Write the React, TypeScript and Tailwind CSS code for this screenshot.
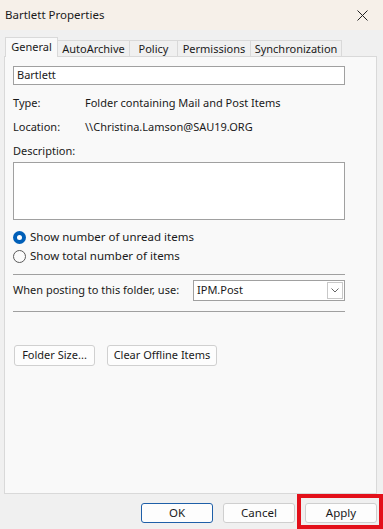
import React from "react";

const font = { fontFamily: '"Noto Sans", "Segoe UI", sans-serif' };

function Btn({ children, w, primary }: { children: React.ReactNode; w: string; primary?: boolean }) {
  return (
    <div
      className={`${w} h-[20px] flex items-center justify-center rounded-[3px] bg-[#fdfdfd] text-[11.5px] text-[#1a1a1a] border ${
        primary ? "border-[#1e5fa8]" : "border-[#cfcfcf]"
      }`}
    >
      {children}
    </div>
  );
}

export default function App() {
  return (
    <div
      className="relative w-[383px] h-[529px] bg-[#f0f0f0] flex flex-col text-[11px] text-[#1a1a1a] overflow-hidden"
      style={font}
    >
      {/* title bar */}
      <div className="h-[30px] flex items-center justify-between pl-[5px] pr-[15px] bg-[#f6f0e9]">
        <span className="text-[11.5px]">Bartlett Properties</span>
        <svg width="11" height="11" viewBox="0 0 11 11">
          <path d="M0.5 0.5 L10.5 10.5 M10.5 0.5 L0.5 10.5" stroke="#222" strokeWidth="1" />
        </svg>
      </div>

      <div className="px-[4px] pt-[7px] flex flex-col">
        {/* tabs */}
        <div className="flex items-end h-[20px] pl-[1px]">
          <div className="h-[20px] w-[53px] flex items-center justify-center bg-[#f9f9f9] border border-b-0 border-[#d9d9d9] relative z-10">
            General
          </div>
          <div className="h-[17px] w-[72px] flex items-center justify-center border-t border-r border-[#d9d9d9] bg-[#f0f0f0]">
            AutoArchive
          </div>
          <div className="h-[17px] w-[48px] flex items-center justify-center border-t border-r border-[#d9d9d9] bg-[#f0f0f0]">
            Policy
          </div>
          <div className="h-[17px] w-[73px] flex items-center justify-center border-t border-r border-[#d9d9d9] bg-[#f0f0f0]">
            Permissions
          </div>
          <div className="h-[17px] w-[91px] flex items-center justify-center border-t border-r border-[#d9d9d9] bg-[#f0f0f0]">
            Synchronization
          </div>
        </div>

        {/* panel */}
        <div className="-mt-px w-[373px] h-[438px] bg-[#f9f9f9] border border-[#d9d9d9] pl-[8px] pt-[9px] flex flex-col">
          <div className="w-[332px] h-[19px] bg-white border border-[#a0a0a0] flex items-center pl-[3px]">
            Bartlett
          </div>

          <div className="flex mt-[9px] h-[18px] items-center">
            <span className="w-[72px]">Type:</span>
            <span>Folder containing Mail and Post Items</span>
          </div>
          <div className="flex mt-[6px] h-[18px] items-center">
            <span className="w-[72px]">Location:</span>
            <span>\\Christina.Lamson@SAU19.ORG</span>
          </div>
          <div className="mt-[6px] h-[18px] flex items-center">Description:</div>

          <div className="mt-[2px] w-[332px] h-[58px] bg-white border border-[#a0a0a0]" />

          <div className="mt-[8px] flex items-center h-[18px] gap-[4px]">
            <div className="w-[13px] h-[13px] rounded-full bg-[#005fb8] flex items-center justify-center">
              <div className="w-[5px] h-[5px] rounded-full bg-white" />
            </div>
            <span className="text-[11.5px]">Show number of unread items</span>
          </div>
          <div className="mt-[1px] flex items-center h-[18px] gap-[4px]">
            <div className="w-[13px] h-[13px] rounded-full border border-[#5a5a5a] bg-[#fbfbfb]" />
            <span className="text-[11.5px]">Show total number of items</span>
          </div>

          <div className="mt-[9px] w-[332px] h-px bg-[#a0a0a0]" />

          <div className="mt-[5px] flex items-center h-[21px]">
            <span className="w-[180px]">When posting to this folder, use:</span>
            <div className="w-[152px] h-[21px] bg-white border border-[#a0a0a0] flex items-center justify-between pl-[3px] pr-[1px]">
              <span>IPM.Post</span>
              <div className="w-[16px] h-[17px] border border-[#c8c8c8] flex items-center justify-center">
                <svg width="8" height="5" viewBox="0 0 8 5">
                  <path d="M0.5 0.5 L4 4 L7.5 0.5" stroke="#666" fill="none" strokeWidth="1" />
                </svg>
              </div>
            </div>
          </div>

          <div className="mt-[10px] w-[332px] h-px bg-[#a0a0a0]" />

          <div className="mt-[33px] flex gap-[12px] pl-[1px]">
            <div className="w-[81px] h-[21px] flex items-center justify-center rounded-[3px] bg-[#fdfdfd] border border-[#d0d0d0]">
              Folder Size...
            </div>
            <div className="w-[110px] h-[21px] flex items-center justify-center rounded-[3px] bg-[#fdfdfd] border border-[#d0d0d0]">
              Clear Offline Items
            </div>
          </div>
        </div>
      </div>

      {/* bottom buttons */}
      <div className="mt-[9px] flex justify-end gap-[10px] pr-[6px]">
        <Btn w="w-[72px]" primary>OK</Btn>
        <Btn w="w-[72px]">Cancel</Btn>
        <Btn w="w-[72px]">Apply</Btn>
      </div>

      {/* red annotation box */}
      <div className="absolute left-[297px] top-[494px] w-[86px] h-[35px] border-[4px] border-[#e3101a]" />
    </div>
  );
}
